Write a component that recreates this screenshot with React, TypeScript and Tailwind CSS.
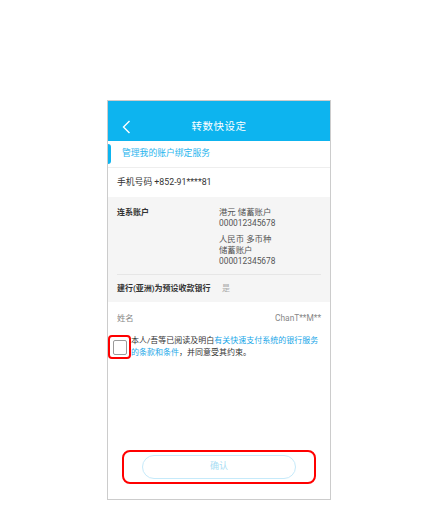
import React from 'react';

const font = { fontFamily: 'Roboto, "Noto Sans CJK SC", sans-serif' };

export default function App() {
  return (
    <div className="w-[438px] h-[510px] bg-white pt-[100px] flex justify-center" style={font}>
      <div className="w-[224px] h-[400px] border border-[#cccccc] flex flex-col bg-white">
        {/* header */}
        <header className="h-[40px] pt-[12px] bg-[#0db4ef] relative flex items-center justify-center shrink-0">
          <svg className="absolute left-[14px] top-[19px]" width="9" height="14" viewBox="0 0 9 14">
            <polyline points="7.5,1 1.5,7 7.5,13" fill="none" stroke="#ffffff" strokeWidth="1.4" />
          </svg>
          <h1 className="text-white text-[10.5px] tracking-[0.5px]">转数快设定</h1>
        </header>

        {/* section title */}
        <div className="h-[27px] flex items-center border-b border-[#eeeeee] shrink-0">
          <div className="w-[3px] h-[20px] bg-[#0db4ef] rounded-r-sm" />
          <span className="ml-[11px] text-[8.8px] text-[#29b5ee]">管理我的账户绑定服务</span>
        </div>

        {/* phone */}
        <div className="h-[29px] flex items-center px-[9px] text-[8.8px] text-[#333333] shrink-0">
          手机号码 +852-91****81
        </div>

        {/* linked accounts */}
        <div className="bg-[#f5f5f5] px-[9px] shrink-0">
          <div className="flex pt-[10px] pb-[7px] border-b border-[#e6e6e6]">
            <div className="w-[102px] text-[8px] leading-[11px] font-semibold text-[#333333]">连系账户</div>
            <div className="flex flex-col gap-[5px] text-[8.4px] leading-[11px] text-[#555555]">
              <div>
                <div>港元 储蓄账户</div>
                <div>000012345678</div>
              </div>
              <div>
                <div>人民币 多币种</div>
                <div>储蓄账户</div>
                <div>000012345678</div>
              </div>
            </div>
          </div>
          <div className="h-[27px] flex items-center text-[8px]">
            <span className="w-[105px] font-semibold text-[#333333]">建行(亚洲)为预设收款银行</span>
            <span className="text-[#aaaaaa]">是</span>
          </div>
        </div>

        {/* name */}
        <div className="h-[32px] flex items-center justify-between px-[9px] text-[8.4px] text-[#888888] shrink-0">
          <span>姓名</span>
          <span>ChanT**M**</span>
        </div>

        {/* terms */}
        <div className="flex items-start shrink-0">
          <div className="w-[23px] h-[24px] border-2 border-[#ff0000] rounded-[4px] flex items-center justify-center mt-[1px] shrink-0">
            <div className="w-[14px] h-[15px] border border-[#9a9a9a] rounded-[2px] bg-white" />
          </div>
          <p className="text-[8px] leading-[12px] text-[#333333] pr-[7px] mt-[1px]">
            本人/吾等已阅读及明白<span className="text-[#1aa7e8]">有关快速支付系统的银行服务的条款和条件</span>，并同意受其约束。
          </p>
        </div>

        {/* confirm */}
        <div className="mt-auto mb-[15px] mx-[14px] h-[34px] border-2 border-[#ff0000] rounded-[8px] flex items-center justify-center shrink-0">
          <button className="w-[154px] h-[24px] rounded-full border border-[#c6eafa] text-[9px] text-[#a8ddf4] bg-white">
            确认
          </button>
        </div>
      </div>
    </div>
  );
}
